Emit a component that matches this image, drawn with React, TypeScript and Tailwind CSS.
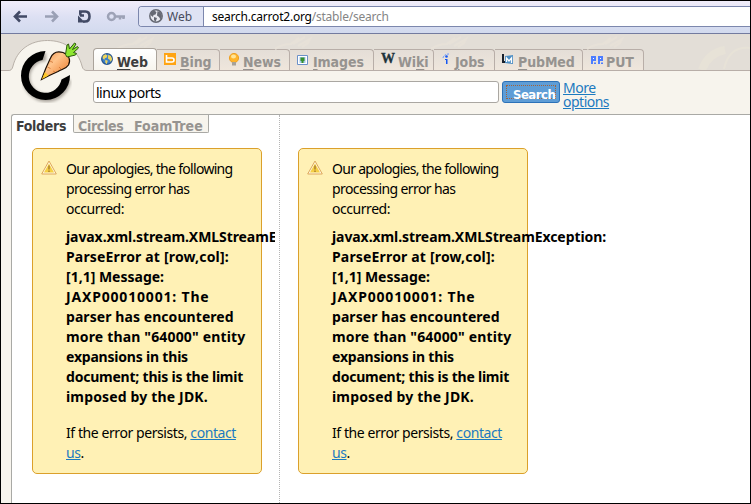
import React from "react";

function Line({ children, className = "" }: { children: React.ReactNode; className?: string }) {
  return <span className={`block whitespace-nowrap ${className}`}>{children}</span>;
}

function Warning() {
  return (
    <svg width="16" height="15" viewBox="0 0 16 15" className="mt-[11px] ml-[8px] shrink-0">
      <path d="M8 1 15.3 14H.7Z" fill="#fff8dd" stroke="#dda75c" strokeLinejoin="round" />
      <path d="M8 3.5 13 12.5H3Z" fill="#f5cf45" />
      <path d="M7.2 5.5h1.6v4H7.2zM7.2 10.5h1.6V12H7.2z" fill="#b08430" />
    </svg>
  );
}

function ErrorBox({ className = "" }: { className?: string }) {
  return (
    <div className={`flex h-[326px] w-[230px] shrink-0 rounded-[5px] border border-[#dba02b] bg-[#fff1b5] ${className}`}>
      <Warning />
      <div className="ml-[9px] w-[190px] pt-[10px] font-['Noto_Sans',sans-serif] text-[14px] leading-[20px] text-black">
        <Line className="tracking-[-0.7px]">Our apologies, the following</Line>
        <Line className="tracking-[-0.6px]">processing error has</Line>
        <Line className="tracking-[-0.45px]">occurred:</Line>
        <div className="mt-[8px] font-bold">
          <Line className="tracking-[-0.08px]">javax.xml.stream.XMLStreamException:</Line>
          <Line className="tracking-[0.17px]">ParseError at [row,col]:</Line>
          <Line>[1,1] Message:</Line>
          <Line className="tracking-[0.82px]">JAXP00010001: The</Line>
          <Line className="tracking-[0.07px]">parser has encountered</Line>
          <Line className="tracking-[0.16px]">more than "64000" entity</Line>
          <Line className="tracking-[-0.2px]">expansions in this</Line>
          <Line className="tracking-[-0.22px]">document; this is the limit</Line>
          <Line className="tracking-[0.16px]">imposed by the JDK.</Line>
        </div>
        <div className="mt-[16px] tracking-[-0.42px]">
          <Line>If the error persists, <a className="text-[#1c7ac0] underline">contact</a></Line>
          <Line><a className="text-[#1c7ac0] underline">us</a>.</Line>
        </div>
      </div>
    </div>
  );
}

function Globe({ gray = false }: { gray?: boolean }) {
  return (
    <svg width={gray ? 14 : 12} height={gray ? 14 : 12} viewBox="0 0 14 14">
      <circle cx="7" cy="7" r="6.2" fill={gray ? "#e8e9f0" : "#3b7fcb"} stroke={gray ? "#666974" : "#27558f"} strokeWidth="1.5" />
      <path d="M2 3.5 5 1.5 7.5 3 6.5 5.5 4.5 6 4 8 2 6.5ZM5 8l3 1-1.5 4L5 11ZM8.5 2l3 1.5L13 7l-1.5 3.5L10 8 8 6.5Z" fill={gray ? "#666974" : "#ecd45c"} />
    </svg>
  );
}

const icons: Record<string, React.ReactNode> = {
  Web: <Globe />,
  Bing: <svg width="12" height="12"><path d="M0 0h12v12H0z" fill="#ffa413" /><path d="M2.5 2v7H8a1.800 1.800 0 0 0 0-4H3" fill="none" stroke="#fff" strokeWidth="1.6" /></svg>,
  News: <svg width="12" height="14"><circle cx="6" cy="5" r="4.6" fill="#ffb52c" stroke="#eda025" /><ellipse cx="5.5" cy="3.5" rx="2.5" ry="2" fill="#ffe599" /><path d="M4 9h4v3.5H4z" fill="#a7a298" /></svg>,
  Images: <svg width="11" height="12"><path d="M.5 1.500h10v9H.5z" fill="#fff" stroke="#6b91c8" /><path d="M2.5 3h6v6h-6z" fill="#a9cbea" /><path d="M3.500 3.500h4v3.5h-4zM4.5 7h2v2h-2z" fill="#36902e" /></svg>,
  Wiki: <span className="block font-['Liberation_Serif',serif] text-[14px] leading-[14px] text-[#20333b] tracking-[-1px] [-webkit-text-stroke:0.3px]">W</span>,
  Jobs: <svg width="8" height="13"><path d="M1 5Q2 1 7 1" fill="none" stroke="#6b9cff" strokeDasharray="2 1" /><circle cx="4.5" cy="3.5" r="1.3" fill="#1557f2" /><path d="M3 6h2.5v5H4V7H3Z" fill="#1557f2" /></svg>,
  PubMed: <svg width="12" height="13"><path d="M1 0v8h3" fill="none" stroke="#17202c" strokeWidth="2" /><path d="M3 2l8-1v9l-8-1Z" fill="#4e8fc4" /><path d="M4.5 8V4l2.5 3 2.5-3v5" fill="none" stroke="#fff" strokeWidth="1.3" /></svg>,
  PUT: <svg width="12" height="10"><path d="M0 0h5v5H2v3H0ZM7 0h5v5H9v3H7Z" fill="#4c7cff" /><path d="M2 2h1v1H2zM9 2h1v1H9z" fill="#fff" /><path d="M3 6.500h2V8H3zM10 6.500h2V8h-2z" fill="#4c7cff" /></svg>,
};

function Tab({ name, k, className, icon }: { name: string; k: number; className: string; icon: string }) {
  return (
    <div className={`flex h-[21px] shrink-0 rounded-tr-[4px] border-t border-r border-[#b8aea8] bg-linear-to-b from-[#e4ded7] to-[#efe6dc] font-['DejaVu_Sans_Condensed',sans-serif] text-[14px] leading-[21px] font-bold text-[#969390] ${className}`}>
      <span className={`shrink-0 ${icon}`}>{icons[name]}</span>
      <span className="pt-[2px] tracking-[-0.1px] whitespace-nowrap">
        {name.slice(0, k)}<u className="underline-offset-2">{name.slice(k, k + 1)}</u>{name.slice(k + 1)}
      </span>
    </div>
  );
}

function Watermark({ className }: { className: string }) {
  return (
    <svg width="60" height="16" viewBox="0 0 60 16" className={`absolute ${className}`} fill="none" stroke="#e7e1d8" strokeWidth="2.200">
      <path d="M1 14Q8 9 17 9L25 3M19 9 31 2M24 11 36 4 34 8 28 12" />
    </svg>
  );
}

function Logo() {
  return (
    <svg width="82" height="76" viewBox="8 34 82 76" className="absolute top-0 left-[7px]">
      <defs>
        <linearGradient id="carrot" x1="0" y1="0" x2="1" y2="1">
          <stop offset="0" stopColor="#f0883c" /><stop offset=".4" stopColor="#ffc48c" /><stop offset="1" stopColor="#e9701a" />
        </linearGradient>
        <filter id="soft"><feGaussianBlur stdDeviation="1.6" /></filter>
      </defs>
      <path d="M8 70.5Q12 71 13 66C17 50 30 40.5 47.500 40.500S78 50 82 66Q83 71 88 70.500V76H8Z" fill="#f7f4ed" />
      <path d="M8 70.500Q12 71 13 66C17 50 30 40.500 47.500 40.500S78 50 82 66Q83 71 88 70.500" fill="none" stroke="#b8b0a8" />
      <path d="M45 55A20.500 20.500 0 1 0 66 78" fill="none" stroke="#aaa59d" strokeWidth="8" filter="url(#soft)" transform="translate(1 2)" />
      <path d="M45.500 51A24.500 24.500 0 1 0 70 75L61.500 79.500A16.500 16.500 0 1 1 42.500 60Z" fill="#000" />
      <path d="M41.500 79.500Q46 67 50.500 58C53 52 58 51 63 52.500C69 54.500 71 60 68.500 65C66 69 62 69 58 71.500Q50 75 41.500 79.500Z" fill="url(#carrot)" stroke="#1b0d03" strokeWidth="1.200" />
      <path d="M41.800 79.200 45 72 48.500 75.500Z" fill="#ffc928" />
      <path d="M50 61l3 1.500M47.500 67l3 1.500M59 67l2 2M53 71l2 1" stroke="#c9682a" strokeWidth=".7" />
      <path d="M65.500 54.500 67 45l1.500-1 1 5 5-6 1.500 1-3.500 5.500 5-3 1 1.500-5 4.500 3 1-1 1.500L67 57Z" fill="#8ee631" stroke="#2c5a0c" strokeWidth="1" />
    </svg>
  );
}

export default function App() {
  return (
    <div className="flex h-[504px] w-[751px] flex-col overflow-hidden border border-black bg-[#f7f4ed] font-['Noto_Sans',sans-serif]">
      <div className="flex h-[33px] shrink-0 border-b border-[#737b9f] bg-linear-to-b from-[#f1edfa] via-[#dde0f3] to-[#d2daee]">
        <svg width="137" height="32" viewBox="1 1 137 32" className="shrink-0" fill="none">
          <path d="M27 16.500H15M20 11.500l-5 5 5 5" stroke="#424a65" strokeWidth="2.600" />
          <path d="M45 16.500h12M52 11.500l5 5-5 5" stroke="#9aa0b5" strokeWidth="2.600" />
          <path d="M79 11.500H85.500Q89.500 11.500 89.500 16.500T85 21.500H83M84 15.500H81Q79 12 82 11.500" stroke="#424a65" strokeWidth="2.600" />
          <path d="M78 15.500V22.500H85Z" fill="#424a65" />
          <circle cx="111.500" cy="16.500" r="3.500" stroke="#9da2b6" strokeWidth="2.500" />
          <path d="M115 16.500h10M120 17v2.500M123.500 17v2" stroke="#9da2b6" strokeWidth="2.500" />
        </svg>
        <div className="mt-[5px] flex h-[21px] grow rounded-l-[4px] border border-r-0 border-[#7c87ad] bg-white">
          <div className="flex w-[65px] shrink-0 rounded-l-[3px] border-r border-[#7c87ad] bg-[#dfe3f4] pt-[2px] pl-[10px] text-[12px] leading-[16px] text-[#474b5c]">
            <Globe gray />
            <span className="ml-[4px]">Web</span>
          </div>
          <div className="pt-[2px] pl-[8px] text-[12px] leading-[16px] tracking-[-0.22px] whitespace-nowrap text-black">
            search.carrot2.org<span className="text-[#858585]">/stable/search</span>
          </div>
        </div>
      </div>

      <div className="relative h-[80px] shrink-0">
        <div className="relative flex h-[37px] items-end overflow-hidden border-b border-[#b8aea8] bg-[#e3ded7] pl-[92px]">
          <Watermark className="top-[1px] left-[115px]" />
          <Watermark className="top-[1px] left-[273px]" />
          <Watermark className="top-[1px] left-[429px]" />
          <Watermark className="top-[1px] left-[585px]" />
          <svg width="53" height="28" className="absolute top-[9px] right-0" fill="none" stroke="#e7e2d7" strokeWidth="8">
            <path d="M5 27Q11 10 28 7" /><path d="M27 26Q32 3 53 5" strokeWidth="2" />
          </svg>
          <div className="relative z-10 -mb-px flex h-[23px] w-[64px] shrink-0 rounded-t-[4px] border border-b-0 border-[#aaa39b] bg-linear-to-b from-white to-[#f7f4ed] font-['DejaVu_Sans_Condensed',sans-serif] text-[14px] leading-[21px] font-bold text-[#3d3d3d]">
            <span className="mt-[4px] ml-[7px]"><Globe /></span>
            <span className="ml-[4px] pt-[3px]"><u className="underline-offset-2">W</u>eb</span>
          </div>
          <Tab name="Bing" k={0} className="w-[63px]" icon="mt-[3px] ml-[7px] mr-[4px]" />
          <Tab name="News" k={0} className="w-[70px]" icon="mt-[3px] ml-[8px] mr-[3px]" />
          <Tab name="Images" k={0} className="w-[84px]" icon="mt-[4px] ml-[7px] mr-[5px]" />
          <Tab name="Wiki" k={2} className="w-[60px]" icon="mt-[2px] ml-[7px] mr-[4px]" />
          <Tab name="Jobs" k={0} className="w-[61px]" icon="mt-[3px] ml-[8px] mr-[5px]" />
          <Tab name="PubMed" k={0} className="w-[88px]" icon="mt-[4px] ml-[7px] mr-[4px]" />
          <Tab name="PUT" k={3} className="w-[61px]" icon="mt-[6px] ml-[8px] mr-[3px]" />
        </div>
        <div className="flex pt-[10px] pl-[92px]">
          <div className="h-[22px] w-[406px] rounded-[3px] border border-[#aaa7a2] bg-white pl-[2px] text-[14px] leading-[22px] tracking-[-0.5px] text-black">linux ports</div>
          <div className="ml-[3px] h-[22px] w-[58px] rounded-[3px] border border-[#2c72b8] bg-[#5e9dd6] p-[3px]">
            <div className="h-[14px] w-[50px] border border-dotted border-[#a0633b] pl-[6px] font-['DejaVu_Sans_Condensed',sans-serif] text-[13px] leading-[17px] font-bold tracking-[-0.5px] text-white">Search</div>
          </div>
          <div className="ml-[3px] text-[14px] leading-[14px] tracking-[-0.5px] text-[#1c7ac0] underline">
            <Line>More</Line><Line>options</Line>
          </div>
        </div>
        <Logo />
      </div>

      <div className="ml-[10px] flex grow overflow-hidden rounded-tl-[3px] border-t border-l border-[#a9a9a5] bg-white">
        <div className="w-[268px] shrink-0 overflow-hidden border-r border-dotted border-[#b5b5b5]">
          <div className="flex h-[18px] font-['DejaVu_Sans_Condensed',sans-serif] text-[14px] leading-[22px] font-bold text-[#969390]">
            <span className="w-[61px] pl-[4px] tracking-[-0.3px] text-[#3d3d3d]">Folders</span>
            <div className="-mt-px flex h-[19px] w-[136px] rounded-b-[2px] border border-t-[#d0cfcb] border-[#a9a9a5] bg-[#f7f4ed] pl-[4px] tracking-[-0.3px]">
              <span className="w-[56px]">Circles</span><span className="tracking-[0px]">FoamTree</span>
            </div>
          </div>
          <div className="mt-[15px] ml-[20px] w-[243px] overflow-hidden"><ErrorBox /></div>
        </div>
        <ErrorBox className="mt-[33px] ml-[18px]" />
      </div>
    </div>
  );
}
